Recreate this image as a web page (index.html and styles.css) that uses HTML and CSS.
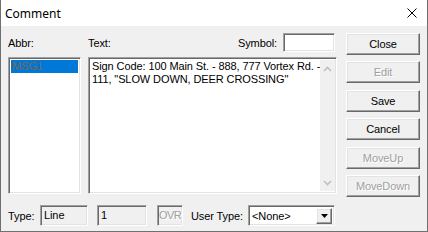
FILE: index.html
```html
<!DOCTYPE html>
<html>
<head>
  <title>Comment</title>
  <link rel="stylesheet" href="styles.css">
</head>
<body>
  <div class="window">
    <div class="titlebar">
      <span class="title">Comment</span>
      <svg class="close-x" width="12" height="12" viewBox="0 0 12 12">
        <path d="M1.5 1.5 L10.5 10.5 M10.5 1.5 L1.5 10.5" stroke="#000" stroke-width="1" fill="none"/>
      </svg>
    </div>
    <div class="client">
      <div class="left">
        <div class="toprow">
          <span class="lbl">Abbr:</span>
          <div class="textlabels">
            <span class="lbl">Text:</span>
            <span class="lbl sym">Symbol:</span>
            <div class="field sunken white symbol"></div>
          </div>
        </div>
        <div class="panes">
          <div class="listbox sunken white">
            <div class="item selected">MSG1</div>
          </div>
          <div class="memo sunken white">
            <div class="memo-text">Sign Code: 100 Main St. - 888, 777 Vortex Rd. -<br>111, "SLOW DOWN, DEER CROSSING"</div>
            <div class="scrollbar">
              <div class="arrow">
                <svg width="9" height="6" viewBox="0 0 9 6"><path d="M1 5 L4.5 1.5 L8 5" stroke="#bfbfbf" stroke-width="1.6" fill="none"/></svg>
              </div>
              <div class="arrow">
                <svg width="9" height="6" viewBox="0 0 9 6"><path d="M1 1 L4.5 4.5 L8 1" stroke="#bfbfbf" stroke-width="1.6" fill="none"/></svg>
              </div>
            </div>
          </div>
        </div>
        <div class="status">
          <span class="lbl type-lbl">Type:</span>
          <div class="field sunken f-type">Line</div>
          <div class="field sunken f-num">1</div>
          <div class="field sunken f-ovr disabled">OVR</div>
          <span class="lbl utype-lbl">User Type:</span>
          <div class="combo sunken white">
            <span>&lt;None&gt;</span>
            <div class="drop">
              <svg width="7" height="4" viewBox="0 0 7 4"><path d="M0 0 L7 0 L3.5 4 Z" fill="#000"/></svg>
            </div>
          </div>
        </div>
      </div>
      <div class="buttons">
        <div class="btn">Close</div>
        <div class="btn disabled">Edit</div>
        <div class="btn">Save</div>
        <div class="btn">Cancel</div>
        <div class="btn disabled">MoveUp</div>
        <div class="btn disabled">MoveDown</div>
      </div>
    </div>
  </div>
</body>
</html>
```

FILE: styles.css
```css
* {
  box-sizing: border-box;
}

body {
  margin: 0;
  font-family: "Liberation Sans", Arial, sans-serif;
  font-size: 11px;
  letter-spacing: -0.1px;
  color: #000;
}

.window {
  width: 428px;
  height: 232px;
  border: 1px solid #707070;
  border-top: none;
  background: #f0f0f0;
  display: flex;
  flex-direction: column;
}

.titlebar {
  height: 26px;
  background: #fff;
  display: flex;
  align-items: center;
  padding: 0 9px 0 4px;
}

.title {
  font-family: "Noto Sans", sans-serif;
  font-size: 12px;
  letter-spacing: 0;
  flex-grow: 1;
}

.client {
  display: flex;
  gap: 9px;
  padding: 7px 6px 0 7px;
}

.left {
  width: 329px;
  display: flex;
  flex-direction: column;
}

.lbl {
  line-height: 20px;
  white-space: nowrap;
}

.toprow, .panes {
  display: grid;
  grid-template-columns: 73px 249px;
  column-gap: 7px;
}

.toprow {
  height: 24px;
}

.textlabels {
  display: flex;
  align-items: flex-start;
}

.sym {
  margin-left: auto;
  margin-right: 6px;
}

.sunken {
  border: 1px solid;
  border-color: #a0a0a0 #fff #fff #a0a0a0;
  box-shadow: inset 1px 1px #696969, inset -1px -1px #e3e3e3;
}

.field {
  height: 21px;
  line-height: 19px;
  padding-left: 3px;
  background: #f0f0f0;
}

.white {
  background: #fff;
}

.symbol {
  width: 52px;
  height: 19px;
  margin-right: 2px;
}

.panes {
  height: 137px;
}

.listbox {
  padding: 2px;
}

.item {
  height: 13px;
  line-height: 13px;
  padding-left: 1px;
}

.item.selected {
  background: #0078d7;
  color: #7a6650;
}

.memo {
  display: flex;
  padding: 2px 1px 2px 2px;
}

.memo-text {
  flex-grow: 1;
  padding-left: 1px;
  line-height: 13px;
  white-space: nowrap;
}

.scrollbar {
  width: 17px;
  background: #f0f0f0;
  display: flex;
  flex-direction: column;
  justify-content: space-between;
}

.arrow {
  height: 17px;
  display: flex;
  align-items: center;
  justify-content: center;
}

.status {
  margin-top: 11px;
  height: 21px;
  display: flex;
  align-items: center;
}

.type-lbl {
  width: 32px;
}

.f-type {
  width: 48px;
}

.f-num {
  width: 50px;
  margin-left: 9px;
}

.f-ovr {
  width: 26px;
  margin-left: 10px;
  padding-left: 1px;
  letter-spacing: -0.6px;
}

.utype-lbl {
  width: 57px;
  margin-left: 8px;
}

.combo {
  width: 87px;
  height: 21px;
  display: flex;
  align-items: center;
  padding: 2px;
}

.combo span {
  flex-grow: 1;
  padding-left: 1px;
}

.drop {
  width: 16px;
  height: 16px;
  background: #f0f0f0;
  border: 1px solid;
  border-color: #fff #696969 #696969 #fff;
  box-shadow: inset -1px -1px #a0a0a0, inset 1px 1px #e3e3e3;
  display: flex;
  align-items: center;
  justify-content: center;
}

.buttons {
  width: 74px;
  display: flex;
  flex-direction: column;
  gap: 6px;
}

.btn {
  height: 22px;
  line-height: 20px;
  text-align: center;
  background: #f0f0f0;
  border: 1px solid;
  border-color: #fff #696969 #696969 #fff;
  box-shadow: inset -1px -1px #a0a0a0, inset 1px 1px #e3e3e3;
}

.btn:nth-child(2n+3) {
  margin-top: 1px;
}

.disabled {
  color: #a0a0a0;
  text-shadow: 1px 1px #fff;
}
```
